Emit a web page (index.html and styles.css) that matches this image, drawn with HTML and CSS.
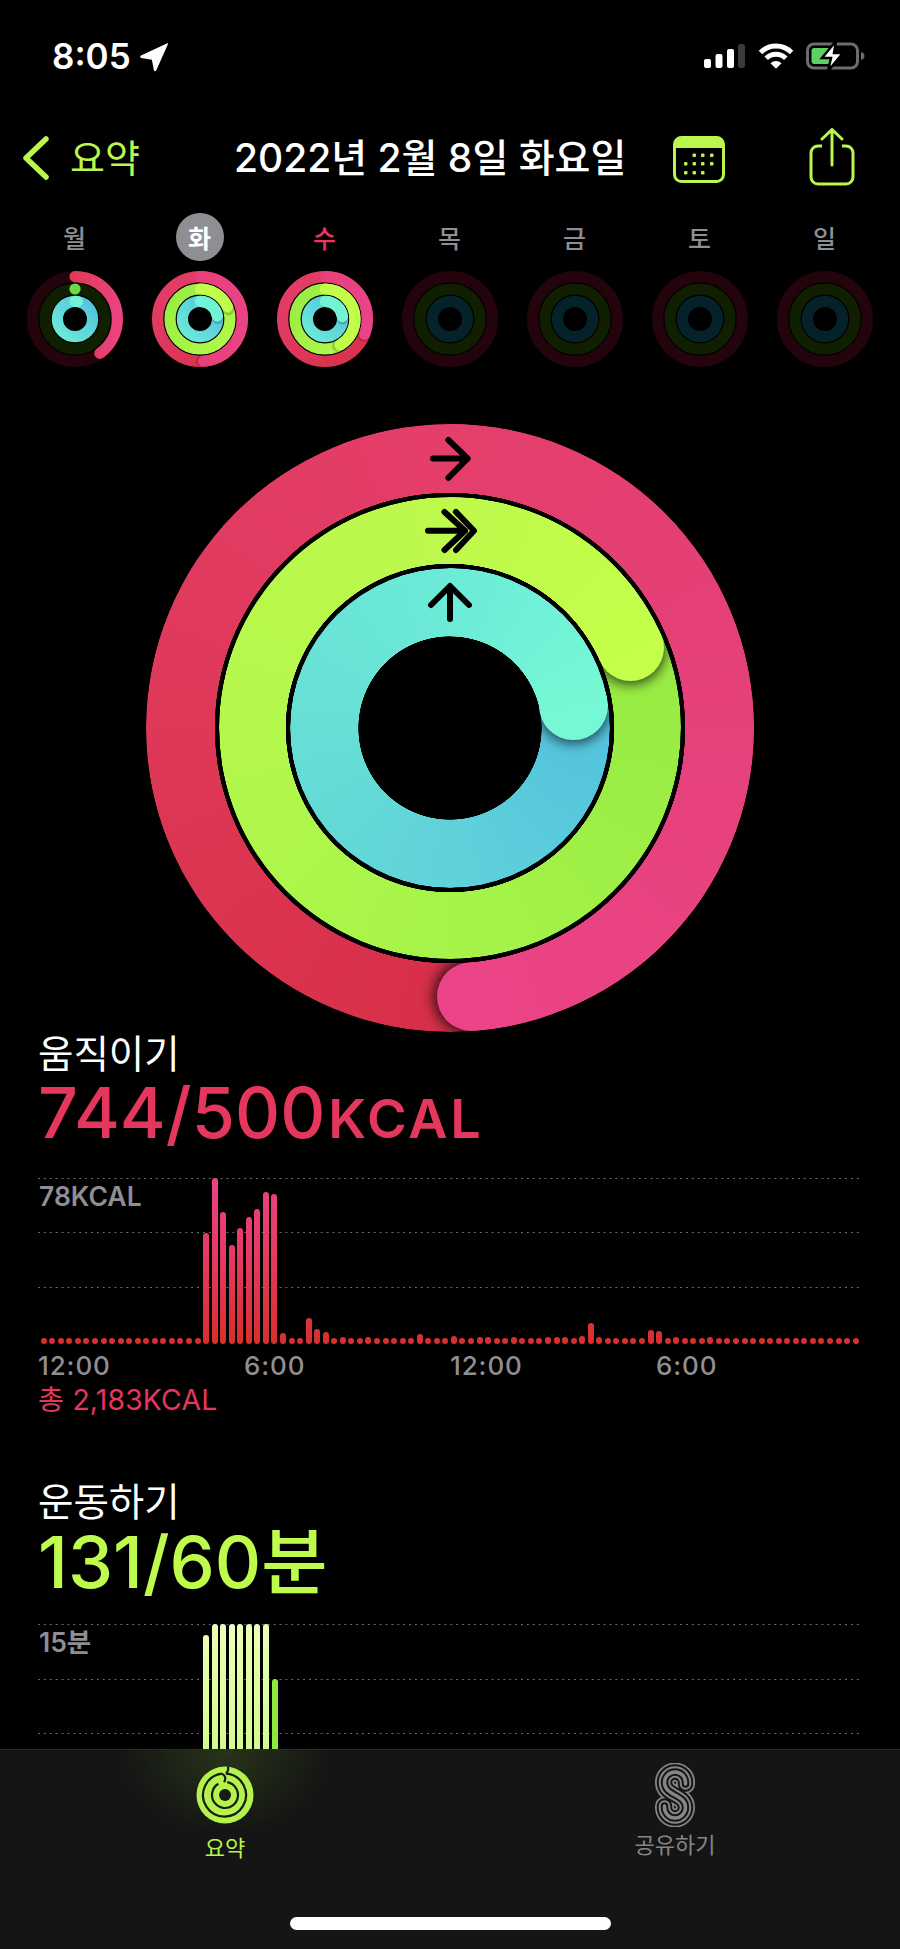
FILE: index.html
```html
<!DOCTYPE html>
<html lang="ko">
<head>
<meta charset="utf-8">
<title>활동</title>
<link rel="stylesheet" href="styles.css">
</head>
<body>
<svg class="defs" width="0" height="0" aria-hidden="true">
  <defs>
    <linearGradient id="mRedBase" x1="0" y1="1" x2="1" y2="0"><stop offset="0" stop-color="#d8304a"/><stop offset="1" stop-color="#e43e6a"/></linearGradient>
    <linearGradient id="mRedHead" x1="0" y1="0" x2="0" y2="1"><stop offset="0" stop-color="#e43e6a"/><stop offset="1" stop-color="#ea4388"/></linearGradient>
    <linearGradient id="mRedMon" x1="0" y1="0" x2="0" y2="1"><stop offset="0" stop-color="#d8302c"/><stop offset="1" stop-color="#ea4380"/></linearGradient>
    <linearGradient id="mGreenBase" x1="1" y1="0" x2="0" y2="1"><stop offset="0" stop-color="#97eb43"/><stop offset="1" stop-color="#b4f84b"/></linearGradient>
    <linearGradient id="mBlueBase" x1="1" y1="1" x2="0" y2="0"><stop offset="0" stop-color="#53c2de"/><stop offset="1" stop-color="#6cebd7"/></linearGradient>
  </defs>
</svg>

<header class="status">
  <div class="status-left">
    <span class="clock">8:05</span>
    <svg class="loc" viewBox="0 0 27 26"><path d="M26 1 15.500 24.600c-.5 1-1.900.9-2.100-.2L11.600 15 2 13.400C.9 13.200.7 11.800 1.800 11.200L25 .3c.7-.3 1.300.1 1 .7Z" fill="#fff"/></svg>
  </div>
  <div class="status-right">
    <svg class="signal" viewBox="0 0 41 24"><rect x="0" y="15" width="7" height="9" rx="2" fill="#fff"/><rect x="11.500" y="10" width="7" height="14" rx="2" fill="#fff"/><rect x="23" y="5" width="7" height="19" rx="2" fill="#fff"/><rect x="34" y="0" width="7" height="24" rx="2" fill="#3a3a3c"/></svg>
    <svg class="wifi" viewBox="0 0 36 26"><path d="M2.500 9.500a22 22 0 0 1 31 0M8.200 15.200a14 14 0 0 1 19.600 0" fill="none" stroke="#fff" stroke-width="5"/><path d="M12.500 20.300a8 8 0 0 1 11 0L18 25.800Z" fill="#fff"/></svg>
    <svg class="battery" viewBox="0 0 59 30"><rect x="1.500" y="3" width="50" height="24" rx="6.500" fill="none" stroke="#6d6d70" stroke-width="3"/><path d="M55 11c2.200.6 3.500 2 3.500 4s-1.300 3.400-3.500 4Z" fill="#6d6d70"/><rect x="5.500" y="7" width="20" height="16" rx="3" fill="#5ed163"/><path d="M30 0 16 17h9l-3 13 15-18h-9Z" fill="#fff" stroke="#000" stroke-width="2.500"/></svg>
  </div>
</header>

<nav class="nav">
  <div class="nav-back"><svg class="chev" viewBox="0 0 27 44"><path d="M24 3 4 22l20 19" fill="none" stroke="#baf64e" stroke-width="5.500" stroke-linecap="round" stroke-linejoin="round"/></svg></div>
  <div class="nav-label">요약</div>
  <div class="nav-title">2022년 2월 8일 화요일</div>
  <svg class="cal" viewBox="0 0 52 47">
    <rect x="1.500" y="1.500" width="49" height="44" rx="7" fill="#000" stroke="#baf64e" stroke-width="3"/>
    <path d="M1.500 12V8.500a7 7 0 0 1 7-7h35a7 7 0 0 1 7 7V12Z" fill="#baf64e"/>
    <g fill="#baf64e">
      <rect x="19.500" y="17.500" width="3.500" height="3.500" rx="1"/><rect x="28" y="17.500" width="3.500" height="3.500" rx="1"/><rect x="37" y="17.500" width="3.500" height="3.500" rx="1"/>
      <rect x="11" y="26" width="3.500" height="3.500" rx="1"/><rect x="19.500" y="26" width="3.500" height="3.500" rx="1"/><rect x="28" y="26" width="3.500" height="3.500" rx="1"/><rect x="37" y="26" width="3.500" height="3.500" rx="1"/>
      <rect x="11" y="35" width="3.500" height="3.500" rx="1"/><rect x="19.500" y="35" width="3.500" height="3.500" rx="1"/><rect x="28" y="35" width="3.500" height="3.500" rx="1"/>
    </g>
  </svg>
  <svg class="share" viewBox="0 0 46 58">
    <path d="M13 18H9a7 7 0 0 0-7 7v24a7 7 0 0 0 7 7h28a7 7 0 0 0 7-7V25a7 7 0 0 0-7-7h-4" fill="none" stroke="#baf64e" stroke-width="3"/>
    <path d="M23 37V2M13 11l10-9.500L33 11" fill="none" stroke="#baf64e" stroke-width="3" stroke-linecap="round" stroke-linejoin="round"/>
  </svg>
</nav>

<section class="week">
  <div class="day"><span class="day-name">월</span></div>
  <div class="day"><span class="day-name day-selected">화</span></div>
  <div class="day"><span class="day-name day-today">수</span></div>
  <div class="day"><span class="day-name">목</span></div>
  <div class="day"><span class="day-name">금</span></div>
  <div class="day"><span class="day-name">토</span></div>
  <div class="day"><span class="day-name">일</span></div>

  <svg class="mini" viewBox="0 0 96 96">
    <g class="mini-rot">
      <circle class="t-red" cx="48" cy="48" r="42.400"/><circle class="t-green" cx="48" cy="48" r="30"/>
      <circle class="s-blue" cx="48" cy="48" r="17.600"/>
      <circle class="h-red-mon" cx="48" cy="48" r="42.400" pathLength="360" stroke-dasharray="144 360"/>
      <circle class="dot-green" cx="48" cy="48" r="30" pathLength="360" stroke-dasharray="0 360"/>
      <circle class="h-blue" cx="48" cy="48" r="17.600" pathLength="360" stroke-dasharray="8 360"/>
    </g>
  </svg>
  <svg class="mini" viewBox="0 0 96 96">
    <g class="mini-rot">
      <circle class="s-red" cx="48" cy="48" r="42.400"/>
      <circle class="shade" cx="48" cy="48" r="42.400" pathLength="360" stroke-dasharray="178 360"/>
      <circle class="h-red" cx="48" cy="48" r="42.400" pathLength="360" stroke-dasharray="175 360"/>
      <circle class="s-green" cx="48" cy="48" r="30"/>
      <circle class="shade" cx="48" cy="48" r="30" pathLength="360" stroke-dasharray="72 360"/>
      <circle class="h-green" cx="48" cy="48" r="30" pathLength="360" stroke-dasharray="66 360"/>
      <circle class="s-blue" cx="48" cy="48" r="17.600"/>
      <circle class="shade" cx="48" cy="48" r="17.600" pathLength="360" stroke-dasharray="88 360"/>
      <circle class="h-blue" cx="48" cy="48" r="17.600" pathLength="360" stroke-dasharray="80 360"/>
    </g>
  </svg>
  <svg class="mini" viewBox="0 0 96 96">
    <g class="mini-rot">
      <circle class="s-red" cx="48" cy="48" r="42.400"/>
      <circle class="shade" cx="48" cy="48" r="42.400" pathLength="360" stroke-dasharray="114 360"/>
      <circle class="h-red" cx="48" cy="48" r="42.400" pathLength="360" stroke-dasharray="111 360"/>
      <circle class="s-green" cx="48" cy="48" r="30"/>
      <circle class="shade" cx="48" cy="48" r="30" pathLength="360" stroke-dasharray="155 360"/>
      <circle class="h-green" cx="48" cy="48" r="30" pathLength="360" stroke-dasharray="150 360"/>
      <circle class="s-blue" cx="48" cy="48" r="17.600"/>
      <circle class="shade" cx="48" cy="48" r="17.600" pathLength="360" stroke-dasharray="90 360"/>
      <circle class="h-blue" cx="48" cy="48" r="17.600" pathLength="360" stroke-dasharray="82 360"/>
    </g>
  </svg>
  <svg class="mini" viewBox="0 0 96 96"><circle class="t-red" cx="48" cy="48" r="42.400"/><circle class="t-green" cx="48" cy="48" r="30"/><circle class="t-blue" cx="48" cy="48" r="17.600"/></svg>
  <svg class="mini" viewBox="0 0 96 96"><circle class="t-red" cx="48" cy="48" r="42.400"/><circle class="t-green" cx="48" cy="48" r="30"/><circle class="t-blue" cx="48" cy="48" r="17.600"/></svg>
  <svg class="mini" viewBox="0 0 96 96"><circle class="t-red" cx="48" cy="48" r="42.400"/><circle class="t-green" cx="48" cy="48" r="30"/><circle class="t-blue" cx="48" cy="48" r="17.600"/></svg>
  <svg class="mini" viewBox="0 0 96 96"><circle class="t-red" cx="48" cy="48" r="42.400"/><circle class="t-green" cx="48" cy="48" r="30"/><circle class="t-blue" cx="48" cy="48" r="17.600"/></svg>
</section>

<section class="hero">
  <div class="hero-layer red-clip">
    <div class="arc arc-red base-red"></div>
    <div class="cap cap-red"></div>
    <div class="arc arc-red head-red"></div>
  </div>
  <div class="hero-layer gap gap-green"></div>
  <div class="hero-layer green-clip">
    <div class="arc arc-green base-green"></div>
    <div class="cap cap-green"></div>
    <div class="arc arc-green head-green"></div>
  </div>
  <div class="hero-layer gap gap-blue"></div>
  <div class="hero-layer blue-clip">
    <div class="arc arc-blue base-blue"></div>
    <div class="cap cap-blue"></div>
    <div class="arc arc-blue head-blue"></div>
  </div>
  <svg class="hero-layer arrows" viewBox="0 0 608 608">
    <path d="M287 34.400H321.600M302.400 16 321.600 34.400 302.400 53.800"/>
    <path d="M282 106.800H319M298.500 88 319 106.800 298.500 126M310 88 328 106.800 310 126"/>
    <path d="M304 195V163M285 181 304 162 323 181"/>
  </svg>
</section>

<section class="metric">
  <h2 class="metric-title">움직이기</h2>
  <div class="metric-value value-red">744/500<span class="unit">KCAL</span></div>
  <div class="chart chart-move">
    <div class="lines"><i></i><i></i><i></i></div>
    <div class="scale">78KCAL</div>
    <div class="bars bars-red">
      <b></b><b></b><b></b><b></b><b></b><b></b><b></b><b></b><b></b><b></b><b></b><b></b><b></b><b></b><b></b><b></b><b></b><b></b><b></b>
      <b style="height:111px"></b><b style="height:166px"></b><b style="height:132px"></b><b style="height:99px"></b><b style="height:116px"></b><b style="height:127px"></b><b style="height:135px"></b><b style="height:152px"></b><b style="height:150px"></b><b style="height:11px"></b>
      <b></b><b></b>
      <b style="height:26px"></b><b style="height:15px"></b><b style="height:12px"></b>
      <b></b><b style="height:7px"></b><b></b><b></b><b style="height:7px"></b><b></b><b></b><b></b><b></b><b></b><b style="height:10px"></b>
      <b></b><b></b><b></b>
      <b style="height:8px"></b><b></b><b></b><b style="height:7px"></b><b style="height:7px"></b><b></b><b></b><b style="height:7px"></b><b></b><b></b><b></b><b style="height:7px"></b><b style="height:7px"></b><b style="height:7px"></b><b></b><b style="height:8px"></b><b style="height:21px"></b><b style="height:7px"></b>
      <b></b><b></b><b></b><b></b><b></b>
      <b style="height:14px"></b><b style="height:13px"></b><b></b><b style="height:7px"></b><b></b><b></b><b></b><b style="height:7px"></b>
      <b></b><b></b><b></b><b></b><b></b><b></b><b></b><b></b><b></b><b></b><b></b><b></b><b></b><b></b><b></b><b></b><b></b>
    </div>
  </div>
  <div class="axis"><span>12:00</span><span>6:00</span><span>12:00</span><span>6:00</span></div>
  <div class="total">총 2,183KCAL</div>
</section>

<section class="metric metric-second">
  <h2 class="metric-title">운동하기</h2>
  <div class="metric-value value-green">131/60분</div>
  <div class="chart chart-exercise">
    <div class="lines"><i></i><i></i><i></i></div>
    <div class="scale">15분</div>
    <div class="bars bars-green">
      <b style="height:155px"></b><b></b><b></b><b></b><b></b><b></b><b></b><b></b><b class="bar-active" style="height:111px"></b>
    </div>
  </div>
</section>

<footer class="tabbar">
  <div class="tab tab-on">
    <svg class="tab-rings" viewBox="0 0 58 58">
      <circle cx="29" cy="29" r="28.500" fill="#b5f34c"/>
      <path d="M30 7.600A21.500 21.500 0 1 1 26 7.700" fill="none" stroke="#181a14" stroke-width="2.200"/>
      <path d="M32 .5C33 4 31.500 6 30 7.600M26 7.700C29 9 30.500 12.500 28 16.200" fill="none" stroke="#181a14" stroke-width="2.200"/>
      <circle cx="29" cy="29" r="13" fill="none" stroke="#181a14" stroke-width="2.200" stroke-dasharray="72 10" transform="rotate(-80 29 29)"/>
      <circle cx="29" cy="29" r="6" fill="#181a14"/>
    </svg>
    <span>요약</span>
  </div>
  <div class="tab tab-off">
    <svg class="tab-share" viewBox="0 0 40 64">
      <g fill="none" stroke-linecap="round" stroke-linejoin="round">
        <path d="M30.500 21V19.500A10.500 10.500 0 0 0 9.500 19.500C9.500 33 30.500 31 30.500 44.500A10.500 10.500 0 0 1 9.500 44.500V43" stroke="#868686" stroke-width="19"/>
        <path d="M30.500 21V19.500A10.500 10.500 0 0 0 9.500 19.500C9.500 33 30.500 31 30.500 44.500A10.500 10.500 0 0 1 9.500 44.500V43" stroke="#141514" stroke-width="15.500"/>
        <path d="M30.500 21V19.500A10.500 10.500 0 0 0 9.500 19.500C9.500 33 30.500 31 30.500 44.500A10.500 10.500 0 0 1 9.500 44.500V43" stroke="#868686" stroke-width="11.500"/>
        <path d="M30.500 21V19.500A10.500 10.500 0 0 0 9.500 19.500C9.500 33 30.500 31 30.500 44.500A10.500 10.500 0 0 1 9.500 44.500V43" stroke="#141514" stroke-width="7.500"/>
        <path d="M30.500 21V19.500A10.500 10.500 0 0 0 9.500 19.500C9.500 33 30.500 31 30.500 44.500A10.500 10.500 0 0 1 9.500 44.500V43" stroke="#868686" stroke-width="3.500"/>
      </g>
    </svg>
    <span>공유하기</span>
  </div>
  <div class="home"></div>
</footer>
</body>
</html>
```

FILE: styles.css
```css
* { box-sizing: border-box; }
html, body { margin: 0; padding: 0; }
body {
  width: 900px;
  height: 1949px;
  background: #000;
  color: #fff;
  font-family: "Inter", "Noto Sans CJK KR", sans-serif;
  overflow: hidden;
  position: relative;
}
.defs { position: absolute; }

/* status bar */
.status {
  height: 112px;
  padding: 41px 35px 0 52px;
  display: flex;
  justify-content: space-between;
  align-items: flex-start;
}
.status-left { display: flex; align-items: center; gap: 8px; height: 30px; }
.clock { font-size: 35px; font-weight: 600; line-height: 30px; }
.loc { width: 30px; height: 29px; margin-top: 2px; }
.status-right { display: flex; align-items: center; height: 30px; }
.signal { width: 41px; height: 24px; margin: 0 13px 0 0; }
.wifi { width: 36px; height: 26px; margin-right: 12px; }
.battery { width: 59px; height: 30px; }

/* navigation */
.nav {
  height: 76px;
  margin-top: 8px;
  display: grid;
  grid-template-columns: 70px 164px 439px 136px 46px;
  align-items: center;
}
.nav-back { padding-left: 22px; display: flex; }
.chev { width: 27px; height: 44px; }
.nav-label { color: #baf64e; font-size: 38px; line-height: 46px; }
.nav-title { font-size: 39px; font-weight: 500; line-height: 50px; white-space: nowrap; }
.cal { width: 52px; height: 47px; margin-top: 2px; }
.share { width: 46px; height: 58px; margin-top: -2px; }

/* week strip */
.week {
  margin-top: 17px;
  padding-left: 12px;
  display: grid;
  grid-template-columns: repeat(7, 125px);
  grid-template-rows: 48px 96px;
  row-gap: 10px;
  justify-items: center;
  align-items: center;
}
.day-name {
  display: flex;
  align-items: center;
  justify-content: center;
  width: 48px;
  height: 48px;
  font-size: 25px;
  font-weight: 500;
  color: #8e8e93;
}
.day-selected { background: #8e8e93; border-radius: 50%; color: #fff; font-weight: 600; }
.day-today { color: #e5365e; }

.mini { width: 96px; height: 96px; display: block; }
.mini circle { fill: none; stroke-width: 11.2; }
.mini-rot { transform: rotate(-90deg); transform-origin: 48px 48px; }
.t-red { stroke: #24040c; }
.t-green { stroke: #0f1f00; }
.t-blue { stroke: #05222a; }
.s-red { stroke: url(#mRedBase); }
.s-green { stroke: url(#mGreenBase); }
.s-blue { stroke: url(#mBlueBase); }
.h-red { stroke: url(#mRedHead); stroke-linecap: round; }
.h-red-mon { stroke: url(#mRedMon); stroke-linecap: round; }
.h-green { stroke: #c2fd4b; stroke-linecap: round; }
.h-blue { stroke: #72f3d6; stroke-linecap: round; }
.dot-green { stroke: #6bd94a; stroke-linecap: round; }
.shade { stroke: rgba(0, 0, 0, .18); stroke-linecap: round; }

/* big rings */
.hero {
  margin-top: 56.6px;
  height: 608px;
  display: grid;
  place-items: center;
}
.hero-layer { grid-area: 1 / 1; position: relative; border-radius: 50%; }
.red-clip { width: 608px; height: 608px; }
.gap { background: #000; }
.gap-green { width: 470px; height: 470px; }
.green-clip { width: 462px; height: 462px; overflow: hidden; }
.gap-blue { width: 328px; height: 328px; }
.blue-clip { width: 320px; height: 320px; overflow: hidden; }
.arc { position: absolute; inset: 0; border-radius: 50%; }
.arc-red {
  -webkit-mask: radial-gradient(closest-side, transparent calc(100% - 69px), #000 calc(100% - 68.5px));
  mask: radial-gradient(closest-side, transparent calc(100% - 69px), #000 calc(100% - 68.5px));
}
.arc-green {
  -webkit-mask: radial-gradient(closest-side, transparent calc(100% - 67px), #000 calc(100% - 66.5px));
  mask: radial-gradient(closest-side, transparent calc(100% - 67px), #000 calc(100% - 66.5px));
}
.arc-blue {
  -webkit-mask: radial-gradient(closest-side, transparent calc(100% - 68.6px), #000 calc(100% - 68.1px));
  mask: radial-gradient(closest-side, transparent calc(100% - 68.6px), #000 calc(100% - 68.1px));
}
.base-red { background: conic-gradient(#e43e6a 0deg, #d8304a 175.5deg, #d8304a 190deg, #db3450 230deg, #df3a5c 290deg, #e43e6a 360deg); }
.head-red { background: conic-gradient(#e43e6a 0deg, #e5417b 90deg, #eb4488 175.5deg, transparent 175.5deg); }
.base-green { background: conic-gradient(#bef94c 0deg, #97eb43 66deg, #9aed44 100deg, #a6f449 180deg, #b4f84b 270deg, #bef94c 360deg); }
.head-green { background: conic-gradient(#bef94c 0deg, #c4ff4b 66deg, transparent 66deg); }
.base-blue { background: conic-gradient(#6cebd7 0deg, #53c2de 80deg, #56c6dc 110deg, #5fd2da 180deg, #67dfd5 270deg, #6cebd7 360deg); }
.head-blue { background: conic-gradient(#6cebd7 0deg, #76f8d6 80deg, transparent 80deg); }
.cap { position: absolute; border-radius: 50%; }
.cap-red { left: 290.6px; top: 538.2px; width: 69px; height: 69px; background: #eb4488; box-shadow: 0 0 14px 3px rgba(0, 0, 0, .8); }
.cap-green { left: 377.9px; top: 117.2px; width: 67px; height: 67px; background: #c4ff4b; box-shadow: 0 2px 12px 2px rgba(0, 0, 0, .65); }
.cap-blue { left: 249.3px; top: 103.9px; width: 68.6px; height: 68.6px; background: #76f8d6; box-shadow: 0 2px 12px 2px rgba(0, 0, 0, .6); }
.arrows { width: 608px; height: 608px; border-radius: 0; }
.arrows path { fill: none; stroke: #000; stroke-width: 6; stroke-linecap: round; stroke-linejoin: round; }

/* metrics */
.metric { padding-left: 38px; }
.metric-title { margin: 0; font-size: 38.5px; font-weight: 400; line-height: 44px; }
.metric-value { font-size: 70px; font-weight: 500; line-height: 76px; margin-top: -1px; white-space: nowrap; }
.value-red { color: #e5365e; }
.value-green { color: #bffb4c; font-size: 72px; margin-top: 0; }
.unit { font-size: 54px; font-weight: 600; letter-spacing: 2.8px; margin-left: 3px; }
.chart { width: 822px; height: 166px; margin-top: 21px; display: grid; }
.chart > * { grid-area: 1 / 1; }
.lines { display: flex; flex-direction: column; gap: 53.5px; }
.lines i {
  display: block;
  height: 1px;
  background: radial-gradient(circle at .75px .5px, #707074 .7px, transparent 1px) 0 0 / 5.9px 1px repeat-x;
}
.scale { font-size: 26.5px; font-weight: 600; line-height: 30px; color: #8e8e93; margin-top: 3px; margin-left: 1px; }
.bars { display: flex; align-items: flex-end; gap: 2.553px; padding-left: 2.700px; }
.bars b {
  display: block;
  flex: none;
  width: 6px;
  height: 6px;
  border-radius: 3px;
}
.bars-red b { background: linear-gradient(to top, #d62f2c, #e63a62 55%, #ea4388) bottom / 100% 166px no-repeat; }
.bars-green { padding-left: 165.200px; }
.bars-green b { height: 166px; background: linear-gradient(to bottom, #ecffb8, #c9fb80); }
.bars-green .bar-active { background: #8ee83f; }
.chart-exercise { margin-top: 24.5px; }
.axis {
  display: grid;
  grid-template-columns: repeat(4, 206px);
  font-size: 26px;
  font-weight: 500;
  line-height: 30px;
  color: #8e8e93;
  margin-top: 7px;
  letter-spacing: .9px;
}
.total { color: #e5365e; font-size: 28.3px; line-height: 32px; margin-top: 3px; letter-spacing: .2px; }
.metric-second { margin-top: 64px; }

/* tab bar */
.tabbar {
  position: absolute;
  left: 0;
  right: 0;
  top: 1749px;
  bottom: 0;
  background: radial-gradient(ellipse 105px 85px at 225px 0, rgba(105, 150, 40, .24), transparent) #141514;
  border-top: 1px solid #2b2c2b;
  display: grid;
  grid-template-columns: 450px 450px;
}
.tab { display: flex; flex-direction: column; align-items: center; font-size: 22px; line-height: 28px; }
.tab-on { color: #b9f64b; }
.tab-off { color: #868686; }
.tab-rings { width: 58px; height: 58px; margin-top: 16px; }
.tab-share { width: 40px; height: 64px; margin-top: 13px; }
.tab-on span { margin-top: 10px; }
.tab-off span { margin-top: 4px; }
.home {
  position: absolute;
  left: 290px;
  top: 167px;
  width: 321px;
  height: 13px;
  background: #fff;
  border-radius: 7px;
}
```
